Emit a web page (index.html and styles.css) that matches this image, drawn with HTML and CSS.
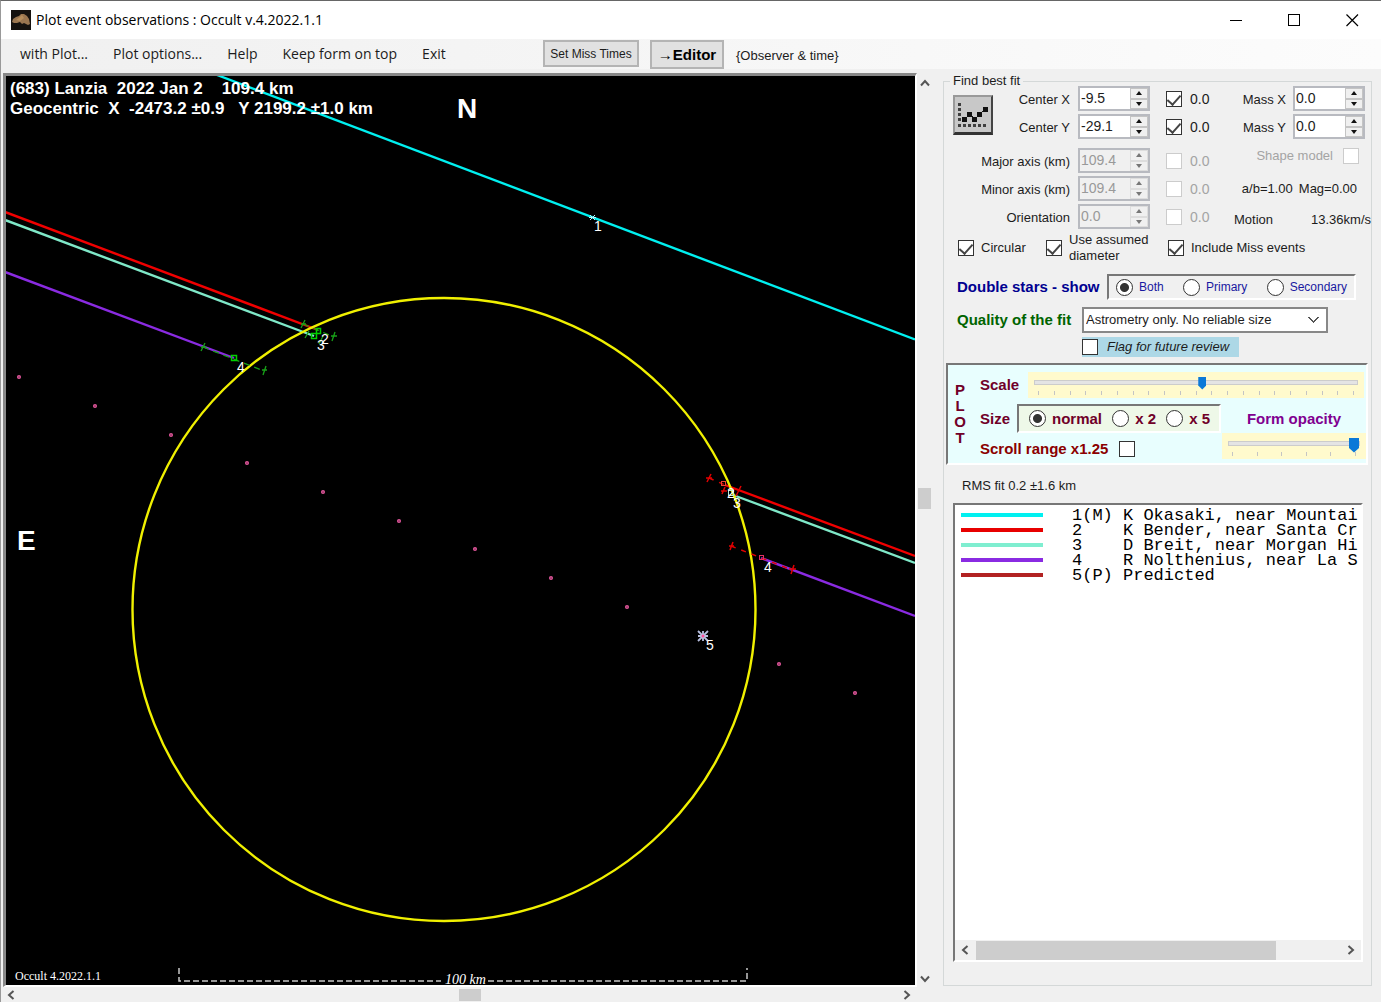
FILE: index.html
```html
<!DOCTYPE html>
<html lang="en">
<head>
<meta charset="utf-8">
<title>Plot event observations : Occult v.4.2022.1.1</title>
<link rel="stylesheet" href="styles.css">
</head>
<body>
<div class="window">
  <header class="titlebar">
    <svg class="app-icon" width="20" height="20" viewBox="0 0 20 20" aria-hidden="true">
      <rect width="20" height="20" fill="#15120f"/>
      <path d="M1 12 L2 9 L5 7 L8 6 L10 4 L13 4 L16 6 L18 9 L19 14 L17 15 L15 14 L13 13 L11 14 L9 12 L6 13 L3 13 Z" fill="#9a7650"/>
      <path d="M5 10 L9 7 L11 5 L13 8 L9 11 Z" fill="#b58d5c"/>
    </svg>
    <h1 class="title">Plot event observations : Occult v.4.2022.1.1</h1>
    <div class="window-buttons">
      <button type="button" aria-label="Minimize"><svg width="13" height="13"><path d="M0 6.5H12" stroke="#000"/></svg></button>
      <button type="button" aria-label="Maximize"><svg width="13" height="13"><rect x=".5" y=".5" width="11" height="11" fill="none" stroke="#000"/></svg></button>
      <button type="button" aria-label="Close"><svg width="13" height="13"><path d="M.5 .5L12 12M12 .5L.5 12" stroke="#000" stroke-width="1.2"/></svg></button>
    </div>
  </header>

  <div class="menubar">
    <nav class="menu">
      <a href="#plot">with Plot...</a>
      <a href="#options">Plot options...</a>
      <a href="#help">Help</a>
      <a href="#top">Keep form on top</a>
      <a href="#exit">Exit</a>
    </nav>
    <button type="button" class="tool-button tool-small">Set Miss Times</button>
    <button type="button" class="tool-button tool-editor">→Editor</button>
    <span class="tool-note">{Observer &amp; time}</span>
  </div>

  <main class="workspace">
    <section class="plot-area">
      <div class="plot-frame">
        <svg class="plot" viewBox="6 76 909 909" role="img" aria-label="Occultation chords">
          <g fill="none" stroke-width="2.4">
            <path d="M217 75L915 339.500" stroke="#00f0f0"/>
            <path d="M5 212L318 330M725 485L915 556" stroke="#f00000"/>
            <path d="M5 220L314 336M733 495L915 563" stroke="#7fe8c8"/>
            <path d="M5 272L234 358M761 558L915 616" stroke="#8a2be2"/>
            <circle cx="444" cy="609.500" r="311.500" stroke="#f0f000"/>
          </g>
          <g fill="none" stroke="#e0559a" stroke-width="1.500">
            <circle cx="19" cy="377" r="1.300"/><circle cx="95" cy="406" r="1.300"/><circle cx="171" cy="435" r="1.300"/>
            <circle cx="247" cy="463" r="1.300"/><circle cx="323" cy="492" r="1.300"/><circle cx="399" cy="521" r="1.300"/>
            <circle cx="475" cy="549" r="1.300"/><circle cx="551" cy="578" r="1.300"/><circle cx="627" cy="607" r="1.300"/>
            <circle cx="779" cy="664" r="1.300"/><circle cx="855" cy="693" r="1.300"/>
          </g>
          <g fill="none" stroke="#18a018" stroke-width="1.300">
            <path d="M203 347L264 371M303 324L334 337" stroke-dasharray="6 5"/>
            <path d="M205 343L201 351M201 347H206M266 366L263 375M262 370H267M305 320L301 328M301 324H306M335 332L332 341M331 336H337M309 331L305 338M323 336L319 344"/>
          </g>
          <g fill="none" stroke="#00d000" stroke-width="1.500">
            <rect x="231.500" y="355.500" width="5" height="5"/>
            <rect x="311.500" y="333.500" width="5" height="5"/>
            <rect x="316.500" y="328.500" width="4" height="5"/>
          </g>
          <g fill="none" stroke="#e00000" stroke-width="1.500">
            <path d="M709 478L725 485M731 546L792 570" stroke-dasharray="5 6"/>
            <path d="M711 474L707 482M706 478H712M725 487L722 494M721 491H727M741 486L736 496M733 542L730 550M729 546H734M794 565L791 574M789 569H796"/>
            <rect x="721.500" y="481.500" width="4" height="4" stroke="#f04030" stroke-width="1"/>
            <rect x="759.500" y="555.500" width="4" height="4" stroke="#e03060" stroke-width="1"/>
          </g>
          <rect x="728.500" y="490.500" width="5" height="5" fill="none" stroke="#b8e8d8"/>
          <path d="M590 215L595 220M595 215L590 220M589 217.500H596" stroke="#b0f8ff" fill="none"/>
          <path d="M698 631L708 641M708 631L698 641M698 636H708M703 631V641" stroke="#b8bfe0" stroke-width="1.800" fill="none"/>
          <circle cx="703" cy="636" r="1.500" fill="#ff4f9a"/>
          <g class="chord-label">
            <text x="594" y="231">1</text>
            <text x="321" y="344">2</text><text x="317" y="350">3</text><text x="237" y="372">4</text>
            <text x="727" y="498">2</text><text x="733" y="508">3</text><text x="764" y="572">4</text><text x="706" y="650">5</text>
          </g>
          <g class="plot-heading">
            <text x="10" y="94">(683) Lanzia  2022 Jan 2    109.4 km</text>
            <text x="10" y="114">Geocentric  X  -2473.2 ±0.9   Y 2199.2 ±1.0 km</text>
          </g>
          <g class="compass"><text x="457" y="118">N</text><text x="17" y="550">E</text></g>
          <path d="M179 968V981H441M488 981H747V968" fill="none" stroke="#c8c8c8" stroke-width="1.500" stroke-dasharray="6 3"/>
          <text class="scale-label" x="445" y="984">100 km</text>
          <text class="version" x="15" y="980">Occult 4.2022.1.1</text>
        </svg>
      </div>
      <div class="scrollbar scroll-v">
        <svg width="10" height="8"><path d="M1 6.500L5 2L9 6.500" class="chevron"/></svg>
        <span class="thumb"></span>
        <svg width="10" height="8"><path d="M1 1.500L5 6L9 1.500" class="chevron"/></svg>
      </div>
      <div class="scrollbar scroll-h">
        <svg width="8" height="10"><path d="M6.500 1L2 5L6.500 9" class="chevron"/></svg>
        <span class="thumb"></span>
        <svg width="8" height="10"><path d="M1.500 1L6 5L1.500 9" class="chevron"/></svg>
      </div>
    </section>

    <fieldset class="panel">
      <legend>Find best fit</legend>

      <div class="fit-grid">
        <button type="button" class="fit-button" aria-label="Fit">
          <svg width="36" height="35" viewBox="0 0 36 35">
            <g fill="#111">
              <path d="M3 6h3v3h-3zM3 11h3v3h-3zM3 16h3v3h-3zM3 21h3v3h-3zM3 27h3v3h-3zM8 27h3v3h-3zM13 27h3v3h-3zM18 27h3v3h-3zM23 27h3v3h-3zM28 27h3v3h-3z" opacity=".75"/>
              <path d="M7 20h5v5H7zM12 15h5v5h-5zM17 20h5v5h-5zM22 15h5v5h-5zM28 10h5v5h-5z"/>
            </g>
            <path d="M10 22L15 17L20 22L30 12" stroke="#111" fill="none"/>
          </svg>
        </button>
        <label class="name" for="cx">Center X</label>
        <span class="spinner"><input id="cx" type="text" value="-9.5"><span class="arrows"><button type="button" class="up" aria-label="Up"></button><button type="button" class="down" aria-label="Down"></button></span></span>
        <label class="tick"><input type="checkbox" checked>0.0</label>
        <label class="mass" for="mx">Mass X</label>
        <span class="spinner"><input id="mx" type="text" value="0.0"><span class="arrows"><button type="button" class="up" aria-label="Up"></button><button type="button" class="down" aria-label="Down"></button></span></span>

        <label class="name" for="cy">Center Y</label>
        <span class="spinner"><input id="cy" type="text" value="-29.1"><span class="arrows"><button type="button" class="up" aria-label="Up"></button><button type="button" class="down" aria-label="Down"></button></span></span>
        <label class="tick"><input type="checkbox" checked>0.0</label>
        <label class="mass" for="my">Mass Y</label>
        <span class="spinner"><input id="my" type="text" value="0.0"><span class="arrows"><button type="button" class="up" aria-label="Up"></button><button type="button" class="down" aria-label="Down"></button></span></span>

        <label class="name wide" for="maj">Major axis (km)</label>
        <span class="spinner"><input id="maj" type="text" value="109.4" disabled><span class="arrows"><button type="button" class="up" disabled aria-label="Up"></button><button type="button" class="down" disabled aria-label="Down"></button></span></span>
        <label class="tick off"><input type="checkbox" disabled>0.0</label>
        <label class="extra shape off">Shape model<input type="checkbox" disabled></label>

        <label class="name wide" for="min">Minor axis (km)</label>
        <span class="spinner"><input id="min" type="text" value="109.4" disabled><span class="arrows"><button type="button" class="up" disabled aria-label="Up"></button><button type="button" class="down" disabled aria-label="Down"></button></span></span>
        <label class="tick off"><input type="checkbox" disabled>0.0</label>
        <span class="extra ratio"><span>a/b=1.00</span><span>Mag=0.00</span></span>

        <label class="name wide" for="ori">Orientation</label>
        <span class="spinner"><input id="ori" type="text" value="0.0" disabled><span class="arrows"><button type="button" class="up" disabled aria-label="Up"></button><button type="button" class="down" disabled aria-label="Down"></button></span></span>
        <label class="tick off"><input type="checkbox" disabled>0.0</label>
        <span class="extra motion"><span>Motion</span><span>13.36km/s</span></span>
      </div>

      <div class="check-row">
        <label class="tick circular"><input type="checkbox" checked>Circular</label>
        <label class="tick assumed"><input type="checkbox" checked><span>Use assumed<br>diameter</span></label>
        <label class="tick"><input type="checkbox" checked>Include Miss events</label>
      </div>

      <div class="row stars-row">
        <strong class="stars-title">Double stars - show</strong>
        <div class="sunken stars">
          <label><input type="radio" name="stars" checked>Both</label>
          <label><input type="radio" name="stars">Primary</label>
          <label><input type="radio" name="stars">Secondary</label>
        </div>
      </div>

      <div class="row quality-row">
        <label class="quality-title" for="quality">Quality of the fit</label>
        <select id="quality"><option>Astrometry only. No reliable size</option></select>
      </div>
      <label class="flag"><input type="checkbox">Flag for future review</label>

      <section class="sunken plot-options">
        <div class="plot-word"><span>P</span><span>L</span><span>O</span><span>T</span></div>
        <div class="plot-controls">
          <div class="scale-row">
            <label for="scale">Scale</label>
            <div class="slider">
              <input id="scale" type="range" min="0" max="100" value="52">
              <div class="ticks"><i></i><i></i><i></i><i></i><i></i><i></i><i></i><i></i><i></i><i></i><i></i><i></i><i></i><i></i><i></i><i></i><i></i><i></i><i></i><i></i><i></i></div>
            </div>
          </div>
          <div class="lower">
            <div class="size-column">
              <div class="size-row">
                <span>Size</span>
                <div class="sunken sizes">
                  <label><input type="radio" name="size" checked>normal</label>
                  <label><input type="radio" name="size">x 2</label>
                  <label><input type="radio" name="size">x 5</label>
                </div>
              </div>
              <label class="scroll-range">Scroll range x1.25<input type="checkbox"></label>
            </div>
            <div class="opacity-column">
              <label for="opacity">Form opacity</label>
              <div class="slider slider-opacity">
                <input id="opacity" type="range" min="0" max="100" value="100">
                <div class="ticks"><i></i><i></i><i></i><i></i><i></i><i></i></div>
              </div>
            </div>
          </div>
        </div>
      </section>

      <p class="rms">RMS fit 0.2 ±1.6 km</p>

      <div class="sunken listbox">
        <table class="observers">
          <tr><td class="swatch cyan"></td><td>1(M) K Okasaki, near Mountai</td></tr>
          <tr><td class="swatch red"></td><td>2    K Bender, near Santa Cr</td></tr>
          <tr><td class="swatch aqua"></td><td>3    D Breit, near Morgan Hi</td></tr>
          <tr><td class="swatch violet"></td><td>4    R Nolthenius, near La S</td></tr>
          <tr><td class="swatch brown"></td><td>5(P) Predicted</td></tr>
        </table>
        <div class="scrollbar list-scroll">
          <svg width="8" height="10"><path d="M6.500 1L2 5L6.500 9" class="chevron"/></svg>
          <span class="thumb"></span>
          <svg width="8" height="10"><path d="M1.500 1L6 5L1.500 9" class="chevron"/></svg>
        </div>
      </div>
    </fieldset>
  </main>
</div>
</body>
</html>
```
FILE: styles.css
```css
* { box-sizing: border-box; }

body {
  margin: 0;
  background: #f0f0f0;
  color: #1c1c1c;
  font: 13px/16px "Liberation Sans", Arial, sans-serif;
}

button, input, select { font: inherit; color: inherit; margin: 0; }

.window {
  display: flex;
  flex-direction: column;
  min-height: 100vh;
  border-top: 1px solid #666;
  border-left: 1px solid #999;
}

/* Title bar */
.titlebar {
  display: flex;
  align-items: center;
  height: 38px;
  padding-left: 10px;
  background: #fff;
}
.title {
  flex: 1;
  margin: 0 0 0 5px;
  font: 14px/20px "Open Sans", "Noto Sans", sans-serif;
  color: #000;
}
.window-buttons { display: flex; }
.window-buttons button {
  display: grid;
  place-items: center;
  width: 58px;
  height: 38px;
  padding: 0;
  border: 0;
  background: none;
}

/* Menu bar */
.menubar {
  display: flex;
  align-items: flex-start;
  height: 30px;
  padding-top: 1px;
  background: linear-gradient(90deg, #f0f0f0, #fcfcfc);
}
.menu {
  display: flex;
  gap: 25px;
  width: 542px;
  padding-left: 19px;
  font: 14px/28px "Open Sans", "Noto Sans", sans-serif;
}
.menu a { color: inherit; text-decoration: none; white-space: nowrap; }
.tool-button {
  padding: 0;
  border: 2px solid #b4b4b4;
  background: #e1e1e1;
  white-space: nowrap;
}
.tool-small { width: 96px; height: 27px; margin-right: 11px; font-size: 12px; }
.tool-editor { width: 74px; height: 29px; margin-right: 12px; font-size: 15px; font-weight: bold; color: #000; }
.tool-note { line-height: 32px; }

/* Work area */
.workspace {
  flex: 1;
  display: grid;
  grid-template-columns: minmax(0, 1fr) 438px;
}
.plot-area {
  display: grid;
  grid-template-columns: minmax(0, 1fr) 15px;
  grid-template-rows: auto 15px;
  align-content: start;
  padding: 4px 11px 0 2px;
}
.plot-frame {
  border: 3px solid #888;
  border-right: 2px solid #fff;
  border-bottom: 2px solid #fff;
  background: #000;
}
.plot { display: block; width: 100%; }
.plot text { white-space: pre; fill: #fff; }
.chord-label { font-size: 14px; }
.plot-heading { font-size: 17px; font-weight: bold; }
.compass { font-size: 28px; font-weight: bold; }
.scale-label { font: italic 14px "Liberation Serif", serif; }
.version { font: 12px "Liberation Serif", serif; }

.scrollbar { display: flex; align-items: center; justify-content: space-between; }
.scrollbar .thumb { background: #cdcdcd; }
.chevron { fill: none; stroke: #555; stroke-width: 2; }
.scroll-v { flex-direction: column; padding: 6px 0 4px; }
.scroll-v .thumb { width: 13px; height: 21px; margin-bottom: 66px; }
.scroll-h { padding: 0 6px 0 4px; }
.scroll-h .thumb { width: 22px; height: 12px; margin-left: 22px; }

/* Side panel */
.panel {
  display: flex;
  flex-direction: column;
  min-width: 0;
  margin: 7px 9px 16px 0;
  padding: 0 3px 23px 2px;
  border: 1px solid #d4d8d8;
}
.panel legend { margin-left: 4px; padding: 0 3px; line-height: 10px; }

.panel input[type="checkbox"] {
  appearance: none;
  flex: none;
  width: 16px;
  height: 16px;
  border: 1px solid #333;
  background: #fff;
}
.panel input[type="checkbox"]:checked { display: grid; place-items: center; }
.panel input[type="checkbox"]:checked::after {
  content: "";
  width: 6px;
  height: 11px;
  margin-bottom: 4px;
  border: solid #444;
  border-width: 0 2px 2px 0;
  transform: rotate(42deg);
}
.panel input[type="checkbox"]:disabled { border-color: #ccc; }
.panel input[type="radio"] {
  appearance: none;
  flex: none;
  width: 17px;
  height: 17px;
  border: 1px solid #333;
  border-radius: 50%;
  background: #fff;
}
.panel input[type="radio"]:checked { background: radial-gradient(circle, #333 0 4px, #fff 5px); }
.off { color: #a4a4a4; }

.fit-grid {
  display: grid;
  grid-template-columns: 40px 85px 72px 68px 1fr 72px;
  grid-template-rows: 25px 25px 31px 25px 25px;
  row-gap: 3px;
  align-items: end;
  padding: 0 3px 0 7px;
}
.fit-button {
  grid-row: 1 / 3;
  align-self: center;
  width: 40px;
  height: 40px;
  margin-top: 4px;
  padding: 0;
  border: 2px solid #999;
  border-right-color: #444;
  border-bottom: 3px solid #333;
  background: #c8c8c8;
}
.fit-button svg { display: block; }
.name { grid-column: 2; justify-self: end; padding-right: 8px; line-height: 23px; white-space: nowrap; }
.name.wide { grid-column: 1 / 3; }
.tick { display: flex; align-items: center; gap: 8px; white-space: nowrap; }
.fit-grid .tick { height: 25px; padding-left: 16px; font-size: 14px; }
.mass { justify-self: end; padding-right: 7px; line-height: 22px; }

.spinner {
  display: flex;
  width: 72px;
  height: 25px;
  border: 2px solid #b8bac0;
  background: #fff;
  font-size: 14px;
}
.spinner input { width: 50px; padding: 0 0 2px 1px; border: 0; background: #fff; }
.spinner input:disabled, .spinner:has(input:disabled) { background: #f0f0f0; color: #999; }
.arrows { display: flex; flex: 1; flex-direction: column; }
.arrows button {
  display: grid;
  place-items: center;
  flex: 1;
  padding: 0;
  border: 1px solid #c4c4c4;
  background: #f0f0f0;
}
.arrows button::after { content: ""; border: 3px solid transparent; }
.arrows .up::after { border-top: 0; border-bottom: 4px solid #111; }
.arrows .down::after { border-bottom: 0; border-top: 4px solid #111; }
.arrows button:disabled { border-color: #ddd; }
.arrows .up:disabled::after { border-bottom-color: #777; }
.arrows .down:disabled::after { border-top-color: #777; }

.extra { grid-column: 5 / 7; display: flex; align-items: center; justify-content: flex-end; height: 25px; white-space: nowrap; }
.shape { gap: 10px; height: 31px; padding: 0 6px 4px 0; }
.ratio { gap: 6px; padding-right: 8px; }
.motion { justify-content: space-between; padding-left: 16px; height: 18px; margin-right: -6px; }

.check-row { display: flex; align-items: center; height: 38px; padding-left: 12px; }
.check-row .tick { gap: 7px; }
.check-row .circular { width: 88px; }
.check-row .assumed { width: 122px; }

.row { display: flex; align-items: center; padding-left: 11px; white-space: nowrap; }
.stars-row { margin-top: 7px; }
.stars-title { width: 150px; font-size: 15px; color: #000090; }
.sunken {
  border-top: 2px solid #777;
  border-left: 2px solid #777;
  border-right: 2px solid #fff;
  border-bottom: 2px solid #fff;
}
.stars { display: flex; justify-content: space-between; width: 249px; height: 26px; padding: 0 7px; font-size: 12px; color: #1818a0; }
.stars label, .sizes label { display: flex; align-items: center; gap: 6px; }
.quality-row { margin-top: 7px; }
.quality-title { width: 125px; font-size: 15px; font-weight: bold; color: #006400; }
select {
  width: 246px;
  height: 26px;
  padding: 0 20px 0 2px;
  border: 2px solid #888;
  appearance: none;
  background:
    linear-gradient(45deg, transparent 46%, #555 46% 60%, transparent 60%) right 12px center / 6px 6px no-repeat,
    linear-gradient(-45deg, transparent 46%, #555 46% 60%, transparent 60%) right 7px center / 6px 6px no-repeat,
    #fff;
}
.flag {
  display: flex;
  align-items: center;
  align-self: flex-start;
  gap: 9px;
  width: 157px;
  height: 20px;
  margin: 4px 0 6px 136px;
  background: #add8e6;
  font-style: italic;
  white-space: nowrap;
}

.plot-options {
  display: flex;
  height: 102px;
  background: #e8fefe;
  font-size: 15px;
  font-weight: bold;
  color: #700028;
}
.plot-word { display: flex; flex-direction: column; align-items: center; width: 24px; padding-top: 17px; line-height: 16px; }
.plot-controls { flex: 1; min-width: 0; }
.scale-row { display: flex; align-items: center; margin: 7px 2px 0 8px; }
.scale-row label { width: 48px; }
.slider { flex: 1; height: 26px; padding: 3px 6px; background: #fffacd; }
.slider input { display: block; appearance: none; width: 100%; height: 14px; background: none; }
.slider input::-webkit-slider-runnable-track { height: 5px; border: 1px solid #ccc; background: #e4e4e4; }
.slider input::-webkit-slider-thumb {
  appearance: none;
  width: 8px;
  height: 13px;
  margin-top: -4px;
  background: #0a78d8;
  clip-path: polygon(0 0, 100% 0, 100% 70%, 50% 100%, 0 70%);
}
.ticks { display: flex; justify-content: space-between; padding: 2px 4px 0; }
.ticks i { width: 1px; height: 4px; background: #c4c4c4; }
.lower { display: flex; justify-content: space-between; }
.size-column { padding-left: 8px; }
.size-row { display: flex; align-items: center; margin-top: 6px; }
.size-row > span { width: 37px; }
.sizes { display: flex; justify-content: space-between; width: 204px; height: 29px; padding: 0 9px 0 10px; background: #eef8e8; }
.scroll-range { display: flex; align-items: center; gap: 11px; margin-top: 8px; color: #8b0000; }
.opacity-column { width: 144px; text-align: center; }
.opacity-column label { display: block; margin-top: 13px; color: #800090; }
.slider-opacity { margin-top: 6px; }
.slider-opacity input::-webkit-slider-thumb { width: 10px; height: 15px; }

.rms { margin: 13px 0 9px 16px; }
.listbox { display: flex; flex: 1; flex-direction: column; justify-content: space-between; min-height: 200px; margin: 0 5px 0 7px; background: #fff; overflow: hidden; }
.observers { table-layout: fixed; width: 100%; margin-top: 3px; border-collapse: collapse; font: 17px/15px "Liberation Mono", monospace; color: #000; }
.observers td { height: 15px; padding: 0; white-space: pre; }
.observers .swatch { width: 117px; background: linear-gradient(currentColor, currentColor) 6px 5px / 82px 4px no-repeat; }
.cyan { color: #00f0f0; }
.red { color: #e80000; }
.aqua { color: #7feed0; }
.violet { color: #8a2be2; }
.brown { color: #b22222; }
.list-scroll { height: 20px; padding: 0 6px; background: #f0f0f0; }
.list-scroll .thumb { width: 300px; height: 19px; margin: 0 auto 0 7px; }
```
